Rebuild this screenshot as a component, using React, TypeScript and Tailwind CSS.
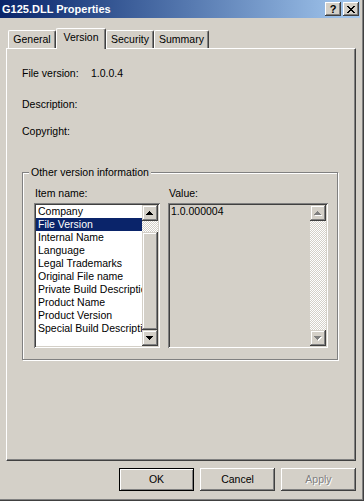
const raised =
  "shadow-[inset_-1px_-1px_#404040,inset_1px_1px_#fff,inset_-2px_-2px_#808080,inset_2px_2px_#d4d0c8]";
const scrollBtn =
  "shadow-[inset_-1px_-1px_#404040,inset_1px_1px_#d4d0c8,inset_-2px_-2px_#808080,inset_2px_2px_#fff]";
const sunken =
  "shadow-[inset_1px_1px_#808080,inset_-1px_-1px_#fff,inset_2px_2px_#404040,inset_-2px_-2px_#d4d0c8]";
const dither =
  "bg-[conic-gradient(#fff_25%,#d4d0c8_0_50%,#fff_0_75%,#d4d0c8_0)] bg-size-[2px_2px]";

function Arrow({ dir, off }: { dir: "up" | "down"; off?: boolean }) {
  const rows =
    dir === "up"
      ? [[3, 1], [2, 3], [1, 5], [0, 7]]
      : [[0, 7], [1, 5], [2, 3], [3, 1]];
  const d = rows.map(([x, w], y) => `M${x} ${y}h${w}v1h-${w}z`).join("");
  return (
    <svg width="8" height="5" viewBox="0 0 8 5" shapeRendering="crispEdges">
      {off && <path d={d} fill="#fff" transform="translate(1 1)" />}
      <path d={d} fill={off ? "#808080" : "#000"} />
    </svg>
  );
}

function CloseGlyph() {
  const rows = [
    [[0, 2], [6, 2]],
    [[1, 2], [5, 2]],
    [[2, 4]],
    [[3, 2]],
    [[2, 4]],
    [[1, 2], [5, 2]],
    [[0, 2], [6, 2]],
  ];
  const d = rows
    .map((segs, y) => segs.map(([x, w]) => `M${x} ${y}h${w}v1h-${w}z`).join(""))
    .join("");
  return (
    <svg width="8" height="7" viewBox="0 0 8 7" shapeRendering="crispEdges">
      <path d={d} fill="#000" />
    </svg>
  );
}

function ScrollButton({ dir, off }: { dir: "up" | "down"; off?: boolean }) {
  return (
    <div className={`h-[16px] flex items-center justify-center bg-[#d4d0c8] ${scrollBtn}`}>
      <Arrow dir={dir} off={off} />
    </div>
  );
}

const items = [
  "Company",
  "File Version",
  "Internal Name",
  "Language",
  "Legal Trademarks",
  "Original File name",
  "Private Build Description",
  "Product Name",
  "Product Version",
  "Special Build Description",
];

const tabs = [
  { label: "General", w: "w-[48px]" },
  { label: "Version", w: "w-[50px]", active: true },
  { label: "Security", w: "w-[48px]" },
  { label: "Summary", w: "w-[55px]" },
];

export default function App() {
  return (
    <div className="w-[364px] h-[501px] bg-[#d4d0c8] shadow-[inset_-1px_-1px_#404040,inset_-2px_-2px_#808080] font-['Liberation_Sans',Arial,sans-serif] text-[10.5px] leading-[13px] text-black flex flex-col overflow-hidden select-none">
      {/* title bar */}
      <div className="h-[18px] w-[360px] bg-linear-to-r from-[#0a246a] to-[#a6caf0] flex items-center pl-[2px] pr-[1px]">
        <span className="flex-1 font-bold text-white text-[11px] leading-[13px]">G125.DLL Properties</span>
        <div className={`w-[16px] h-[14px] bg-[#d4d0c8] flex items-center justify-center ${raised}`}>
          <span className="font-bold text-[11px] leading-none">?</span>
        </div>
        <div className={`ml-[2px] w-[16px] h-[14px] bg-[#d4d0c8] flex items-center justify-center ${raised}`}>
          <CloseGlyph />
        </div>
      </div>

      <div className="flex flex-col pl-[6px] pt-[10px]">
        {/* tabs */}
        <div className="flex items-end h-[20px] pl-[2px]">
          {tabs.map((t) => (
            <div
              key={t.label}
              className={`${t.w} flex justify-center pt-[2px] bg-[#d4d0c8] border-t border-l border-white border-r border-r-[#404040] rounded-t-[2px] shadow-[inset_-1px_0_#808080] ${
                t.active ? "relative z-10 h-[21px] -mb-px" : "h-[18px]"
              }`}
            >
              {t.label}
            </div>
          ))}
        </div>

        {/* panel */}
        <div className="w-[350px] h-[413px] border border-white border-r-[#404040] border-b-[#404040] shadow-[inset_-1px_-1px_#808080] flex flex-col pl-[15px] pt-[18px]">
          <div className="flex">
            <span className="w-[69px]">File version:</span>
            <span>1.0.0.4</span>
          </div>
          <div className="mt-[18px]">Description:</div>
          <div className="mt-[14px]">Copyright:</div>

          {/* group box */}
          <div className="mt-[34px] relative w-[316px] h-[188px] border border-[#808080] shadow-[inset_1px_1px_#fff,1px_1px_#fff] flex gap-[8px] pl-[11px] pt-[14px]">
            <span className="absolute -top-[7px] left-[6px] px-[2px] bg-[#d4d0c8]">Other version information</span>

            <div className="w-[126px] flex flex-col">
              <div className="pl-[1px]">Item name:</div>
              <div className={`mt-[3px] h-[145px] bg-white p-[2px] flex ${sunken}`}>
                <div className="flex-1 flex flex-col overflow-hidden">
                  {items.map((it) => (
                    <div
                      key={it}
                      className={`h-[13px] pl-[2px] whitespace-nowrap ${
                        it === "File Version" ? "bg-[#0a246a] text-white" : ""
                      }`}
                    >
                      {it}
                    </div>
                  ))}
                </div>
                <div className="w-[16px] flex flex-col">
                  <ScrollButton dir="up" />
                  <div className={`h-[11px] ${dither}`} />
                  <div className={`flex-1 bg-[#d4d0c8] ${scrollBtn}`} />
                  <ScrollButton dir="down" />
                </div>
              </div>
            </div>

            <div className="w-[160px] flex flex-col">
              <div className="pl-[1px]">Value:</div>
              <div className={`mt-[3px] h-[145px] bg-[#d4d0c8] p-[2px] flex ${sunken}`}>
                <div className="flex-1 pl-[1px]">1.0.000004</div>
                <div className="w-[16px] flex flex-col">
                  <ScrollButton dir="up" off />
                  <div className={`flex-1 ${dither}`} />
                  <ScrollButton dir="down" off />
                </div>
              </div>
            </div>
          </div>
        </div>

        {/* buttons */}
        <div className="w-[350px] mt-[7px] flex justify-end gap-[6px]">
          <div className="w-[75px] h-[23px] border border-black shadow-[inset_1px_1px_#fff,inset_-1px_-1px_#808080] flex items-center justify-center">
            OK
          </div>
          <div className={`w-[75px] h-[23px] flex items-center justify-center ${raised}`}>Cancel</div>
          <div className={`w-[75px] h-[23px] flex items-center justify-center text-[#808080] [text-shadow:1px_1px_0_#fff] ${raised}`}>
            Apply
          </div>
        </div>
      </div>
    </div>
  );
}
